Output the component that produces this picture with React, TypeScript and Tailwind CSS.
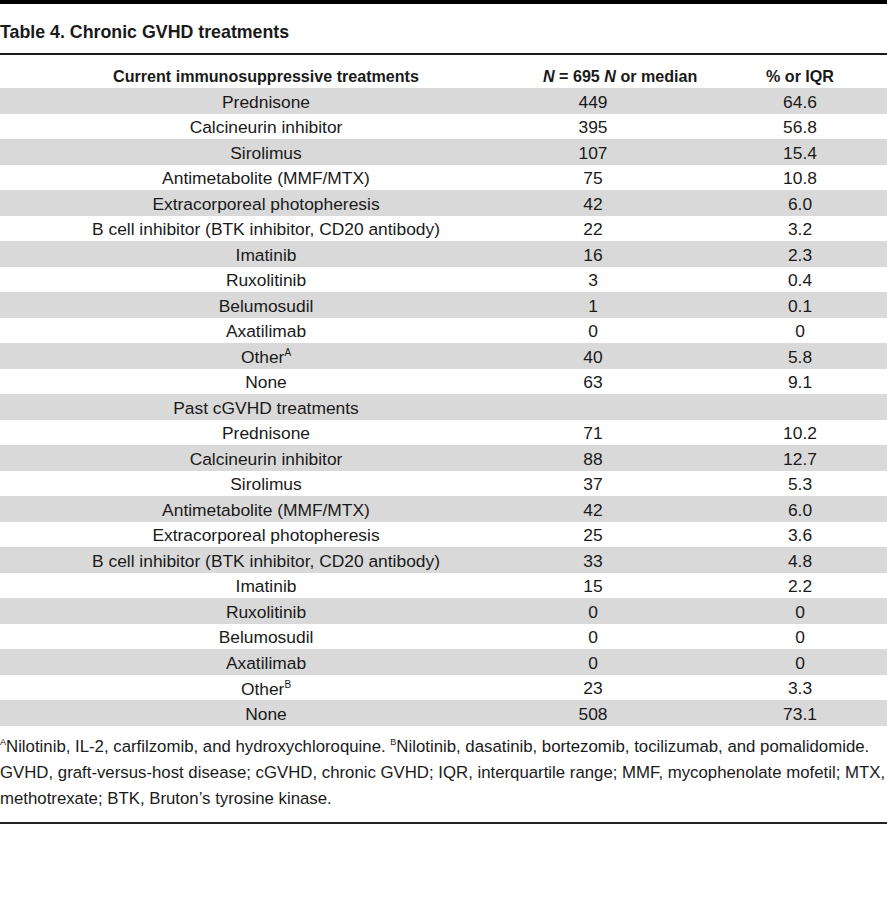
const current: [string, string, string, string?][] = [
  ["Prednisone", "449", "64.6"],
  ["Calcineurin inhibitor", "395", "56.8"],
  ["Sirolimus", "107", "15.4"],
  ["Antimetabolite (MMF/MTX)", "75", "10.8"],
  ["Extracorporeal photopheresis", "42", "6.0"],
  ["B cell inhibitor (BTK inhibitor, CD20 antibody)", "22", "3.2"],
  ["Imatinib", "16", "2.3"],
  ["Ruxolitinib", "3", "0.4"],
  ["Belumosudil", "1", "0.1"],
  ["Axatilimab", "0", "0"],
  ["Other", "40", "5.8", "A"],
  ["None", "63", "9.1"],
];

const past: [string, string, string, string?][] = [
  ["Prednisone", "71", "10.2"],
  ["Calcineurin inhibitor", "88", "12.7"],
  ["Sirolimus", "37", "5.3"],
  ["Antimetabolite (MMF/MTX)", "42", "6.0"],
  ["Extracorporeal photopheresis", "25", "3.6"],
  ["B cell inhibitor (BTK inhibitor, CD20 antibody)", "33", "4.8"],
  ["Imatinib", "15", "2.2"],
  ["Ruxolitinib", "0", "0"],
  ["Belumosudil", "0", "0"],
  ["Axatilimab", "0", "0"],
  ["Other", "23", "3.3", "B"],
  ["None", "508", "73.1"],
];

type Row = { label: string; n: string; pct: string; sup?: string };

const rows: Row[] = [
  ...current.map(([label, n, pct, sup]) => ({ label, n, pct, sup })),
  { label: "Past cGVHD treatments", n: "", pct: "" },
  ...past.map(([label, n, pct, sup]) => ({ label, n, pct, sup })),
];

export default function App() {
  return (
    <div
      className="min-h-screen bg-white text-[#1a1a1a]"
      style={{ fontFamily: '"Liberation Sans", Arial, sans-serif' }}
    >
      <div className="h-1 bg-black" />

      {/* Title */}
      <h1 className="pt-[17px] pb-[10px] text-[17.8px] font-bold leading-[22px]">
        Table 4. Chronic GVHD treatments
      </h1>
      <div className="h-[2px] bg-[#1a1a1a]" />

      {/* Table */}
      <div className="grid grid-cols-[532px_122px_59px_174px] text-[17.4px]">
        <div className="flex h-[33px] items-center justify-center pt-[10px] text-[16.1px] font-bold">
          Current immunosuppressive treatments
        </div>
        <div className="col-span-2 flex h-[33px] items-center whitespace-nowrap pt-[10px] pl-[11px] text-[16.1px] font-bold">
          <i>N</i>&nbsp;= 695&nbsp;<i>N</i>&nbsp;or median
        </div>
        <div className="flex h-[33px] items-center justify-center pt-[10px] text-[16.1px] font-bold">
          % or IQR
        </div>

        {rows.map((r, i) => {
          const bg = i % 2 === 0 ? "bg-[#d9d9d9]" : "bg-white";
          return (
            <div
              key={i}
              className={`col-span-4 grid h-[25.5px] grid-cols-[532px_122px_59px_174px] items-center pt-[3px] ${bg}`}
            >
              <div className="text-center leading-none">
                {r.label}
                {r.sup && <span className="align-super text-[10px] leading-none">{r.sup}</span>}
              </div>
              <div className="text-center leading-none">{r.n}</div>
              <div />
              <div className="text-center leading-none">{r.pct}</div>
            </div>
          );
        })}
      </div>

      {/* Footnote */}
      <div className="pt-[8px] pb-[10px] text-[16.8px] leading-[26px] whitespace-nowrap">
        <div>
          <span className="align-super text-[9px] leading-none">A</span>
          <span>Nilotinib, IL-2, carfilzomib, and hydroxychloroquine. </span>
          <span className="align-super text-[9px] leading-none">B</span>
          <span>Nilotinib, dasatinib, bortezomib, tocilizumab, and pomalidomide.</span>
        </div>
        <div>
          GVHD, graft-versus-host disease; cGVHD, chronic GVHD; IQR, interquartile range; MMF, mycophenolate
          mofetil; MTX,
        </div>
        <div>methotrexate; BTK, Bruton’s tyrosine kinase.</div>
      </div>
      <div className="h-[2px] bg-[#222]" />
    </div>
  );
}
